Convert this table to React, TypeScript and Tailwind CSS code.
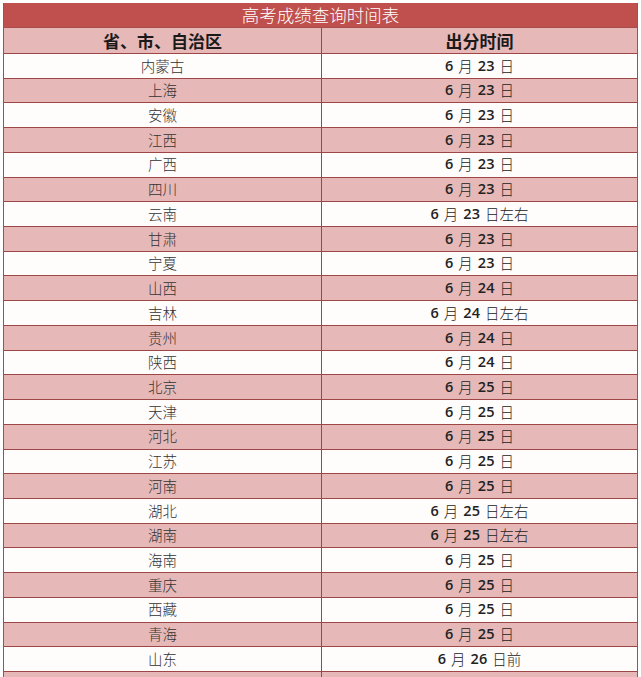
const rows: [string, string, string][] = [
  ["内蒙古", "23", ""],
  ["上海", "23", ""],
  ["安徽", "23", ""],
  ["江西", "23", ""],
  ["广西", "23", ""],
  ["四川", "23", ""],
  ["云南", "23", "左右"],
  ["甘肃", "23", ""],
  ["宁夏", "23", ""],
  ["山西", "24", ""],
  ["吉林", "24", "左右"],
  ["贵州", "24", ""],
  ["陕西", "24", ""],
  ["北京", "25", ""],
  ["天津", "25", ""],
  ["河北", "25", ""],
  ["江苏", "25", ""],
  ["河南", "25", ""],
  ["湖北", "25", "左右"],
  ["湖南", "25", "左右"],
  ["海南", "25", ""],
  ["重庆", "25", ""],
  ["西藏", "25", ""],
  ["青海", "25", ""],
  ["山东", "26", "前"],
  ["", "", ""],
];

const cjk = "font-['Noto_Sans_CJK_SC',sans-serif]";
const num = "font-['Open_Sans',sans-serif] font-semibold";

export default function App() {
  return (
    <div className="h-[677px] w-[641px] overflow-hidden bg-white pl-[3px] pt-[3px]">
      <div className="w-[635px] border-x border-[#a84d4c]">
        <div
          className={`flex h-[25px] items-center justify-center border-b border-[#a84d4c] bg-[#c0504d] text-[17.5px] font-light leading-none text-white ${cjk}`}
        >
          高考成绩查询时间表
        </div>
        <div className="grid h-[26px] grid-cols-[318px_1fr] border-b border-[#9e4645] bg-[#e6b8b7] text-[17px] font-bold leading-none text-[#1a1a1a]">
          <div className={`flex items-center justify-center border-r border-[#9e4645] ${cjk}`}>
            省、市、自治区
          </div>
          <div className={`flex items-center justify-center ${cjk}`}>出分时间</div>
        </div>
        {rows.map(([name, day, suffix], i) => (
          <div
            key={i}
            className={`grid h-[24.72px] grid-cols-[318px_1fr] border-b border-[#9e4645] leading-none ${
              i % 2 === 0 ? "bg-[#fffcfc]" : "bg-[#e6b8b7]"
            }`}
          >
            <div
              className={`flex items-center justify-center border-r border-[#9e4645] text-[14.5px] font-light text-[#333] ${cjk}`}
            >
              {name}
            </div>
            <div className="flex items-center justify-center text-[14.5px] text-[#222]">
              {day && (
                <>
                  <span className={num}>6</span>
                  <span className={`ml-[5px] font-light ${cjk}`}>月</span>
                  <span className={`ml-[5px] ${num}`}>{day}</span>
                  <span className={`ml-[5px] font-light ${cjk}`}>日{suffix}</span>
                </>
              )}
            </div>
          </div>
        ))}
      </div>
    </div>
  );
}
